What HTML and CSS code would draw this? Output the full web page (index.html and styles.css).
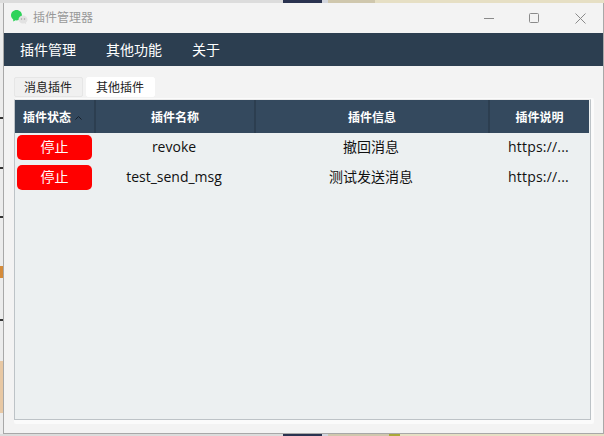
FILE: index.html
```html
<!DOCTYPE html>
<html lang="zh">
<head>
<meta charset="utf-8">
<title>插件管理器</title>
<link rel="stylesheet" href="styles.css">
</head>
<body>
<div class="desktop">
  <div class="strip strip-top">
    <span class="seg s-grey"></span><span class="seg s-navy"></span><span class="seg s-pale"></span><span class="seg s-tan"></span><span class="seg s-cream"></span>
  </div>
  <div class="middle">
    <div class="side">
      <span class="side-gap g1"></span><span class="side-mark m-dark"></span>
      <span class="side-gap g2"></span><span class="side-mark m-dark"></span>
      <span class="side-gap g3"></span><span class="side-mark m-dark"></span>
      <span class="side-gap g4"></span><span class="side-mark m-orange"></span>
      <span class="side-gap g5"></span><span class="side-mark m-dark"></span>
      <span class="side-gap g6"></span><span class="side-mark m-peach"></span>
    </div>
    <div class="window">
      <header class="titlebar">
        <svg class="app-icon" width="17" height="15" viewBox="0 0 17 15">
          <path d="M5.500 0C2.400 0 0 2.300 0 5.200c0 1.700.8 3.200 2.200 4.200L2.300 11.500l2.200-1.200c.3.100.7.100 1 .1 3.100 0 5.500-2.300 5.500-5.200S8.600 0 5.500 0z" fill="#2fd35b"/>
          <path d="M12 5.500C9.500 5.500 7.500 7.300 7.500 9.500s2 4 4.500 4c.5 0 1-.1 1.500-.2l1.700.9-.3-1.600c1-.7 1.600-1.900 1.600-3.100 0-2.200-2-4-4.500-4z" fill="#e2e2e2"/>
          <circle cx="10.500" cy="9" r=".8" fill="#a5a5a5"/><circle cx="13.500" cy="9" r=".8" fill="#a5a5a5"/>
        </svg>
        <span class="title-text">插件管理器</span>
        <div class="controls">
          <svg class="ctl ctl-min" width="10" height="10" viewBox="0 0 10 10"><path d="M0 5.500h10" stroke="#8a8a8a" fill="none"/></svg>
          <svg class="ctl ctl-max" width="10" height="10" viewBox="0 0 10 10"><rect x=".5" y=".5" width="9" height="9" rx="1" stroke="#8a8a8a" fill="none"/></svg>
          <svg class="ctl ctl-close" width="11" height="11" viewBox="0 0 11 11"><path d="M.5.500l10 10M10.500.500l-10 10" stroke="#8a8a8a" fill="none"/></svg>
        </div>
      </header>
      <nav class="menubar">
        <span class="menu-item">插件管理</span>
        <span class="menu-item">其他功能</span>
        <span class="menu-item">关于</span>
      </nav>
      <div class="content">
        <div class="tabs">
          <span class="tab">消息插件</span>
          <span class="tab tab-active">其他插件</span>
        </div>
        <div class="pane">
          <div class="table-box">
            <table class="plugins">
              <colgroup><col class="c1"><col class="c2"><col class="c3"><col class="c4"></colgroup>
              <thead>
                <tr>
                  <th class="th-sort"><span>插件状态</span><svg class="caret" width="7" height="4" viewBox="0 0 7 4"><path d="M.5 3.500l3-3 3 3" stroke="#16202b" fill="none"/></svg></th>
                  <th>插件名称</th>
                  <th>插件信息</th>
                  <th class="th-last">插件说明</th>
                </tr>
              </thead>
              <tbody>
                <tr>
                  <td class="td-btn"><button class="stop" type="button">停止</button></td>
                  <td class="td-text">revoke</td>
                  <td class="td-text">撤回消息</td>
                  <td class="td-link">https://...</td>
                </tr>
                <tr>
                  <td class="td-btn"><button class="stop" type="button">停止</button></td>
                  <td class="td-text">test_send_msg</td>
                  <td class="td-text">测试发送消息</td>
                  <td class="td-link">https://...</td>
                </tr>
              </tbody>
            </table>
          </div>
        </div>
      </div>
    </div>
  </div>
  <div class="strip strip-bottom">
    <span class="seg s-grey"></span><span class="seg s-navy"></span><span class="seg s-pale"></span><span class="seg s-tan-b"></span><span class="seg s-olive"></span><span class="seg s-cream"></span>
  </div>
</div>
</body>
</html>
```
FILE: styles.css
```css
* { box-sizing: border-box; }
html, body { margin: 0; padding: 0; }
body {
  width: 604px;
  height: 436px;
  overflow: hidden;
  font-family: "Open Sans", "Noto Sans CJK SC", sans-serif;
  background: #c9c9c9;
}
.desktop { width: 604px; height: 436px; display: flex; flex-direction: column; }

.strip { display: flex; flex: none; }
.strip-top { height: 3px; }
.strip-bottom { height: 2px; }
.seg { display: block; height: 100%; }
.s-grey { width: 283px; background: #dcdcdc; }
.s-navy { width: 39px; background: #2a3350; }
.s-pale { width: 6px; background: #d3d6de; }
.s-tan { width: 47px; background: #cfc7ad; }
.s-tan-b { width: 61px; background: #cfc7ad; }
.s-olive { width: 11px; background: #a9a83a; }
.s-cream { flex: 1; background: #e6dfc4; }

.middle { display: flex; flex: 1; min-height: 0; }
.side { width: 3px; flex: none; display: flex; flex-direction: column; background: #ececec; }
.side-gap { display: block; }
.g1 { height: 114px; }
.g2 { height: 48px; }
.g3 { height: 47px; }
.g4 { height: 48px; }
.g5 { height: 41px; }
.g6 { height: 40px; }
.side-mark { display: block; }
.m-dark { height: 2px; background: #333; }
.m-orange { height: 12px; background: #d58b3a; }
.m-peach { height: 52px; background: #e8c8a4; }

.window {
  flex: 1;
  display: flex;
  flex-direction: column;
  min-width: 0;
  background: #f3f3f3;
  border-left: 1px solid #a8a8a8;
  border-right: 1px solid #a8a8a8;
  border-bottom: 1px solid #a8a8a8;
}

.titlebar {
  height: 30px;
  flex: none;
  display: flex;
  align-items: center;
  padding-left: 7px;
}
.app-icon { flex: none; margin-top: -1px; }
.title-text { margin-left: 5px; font-size: 12px; color: #999; line-height: 30px; }
.controls { margin-left: auto; display: flex; align-items: center; padding-right: 17px; }
.ctl { display: block; }
.ctl-min { margin-right: 35px; }
.ctl-max { margin-right: 36px; }

.menubar {
  height: 33px;
  flex: none;
  display: flex;
  align-items: center;
  gap: 30px;
  padding-left: 16px;
  background: #2c3e50;
}
.menu-item { font-size: 14px; color: #fff; line-height: 33px; }

.content { flex: 1; min-height: 0; display: flex; flex-direction: column; padding: 11px 9px 9px 10px; }
.tabs { display: flex; gap: 3px; height: 21px; flex: none; }
.tab {
  width: 69px;
  height: 20px;
  padding-right: 1px;
  font-size: 12px;
  line-height: 20px;
  text-align: center;
  color: #222;
  background: #f0f0f0;
  border: 1px solid #e6e6e6;
  border-radius: 2px;
}
.tab-active { background: #fff; border-color: #fff; }

.pane {
  flex: 1;
  min-height: 0;
  display: flex;
  padding: 1px 3px 4px 0;
  background: #fbfbfb;
  border-radius: 2px;
}
.table-box {
  flex: 1;
  min-width: 0;
  background: #ecf0f1;
  border: 1px solid #bdc3c7;
  border-top-color: #e9e9e9;
}
.plugins {
  width: 574px;
  table-layout: fixed;
  border-collapse: separate;
  border-spacing: 0;
  color: #111;
}
.c1 { width: 81px; }
.c2 { width: 160px; }
.c3 { width: 234px; }
.c4 { width: 99px; }
.plugins th {
  padding: 0;
  height: 33px;
  font-size: 12px;
  font-weight: 700;
  color: #fff;
  text-align: center;
  background: #34495e;
  border-right: 2px solid #2c3e50;
}
.plugins th.th-last { border-right: 0; }
.plugins th.th-sort { text-align: left; padding-left: 8px; white-space: nowrap; }
.caret { margin-left: 4px; vertical-align: 2px; }
.plugins td {
  height: 30px;
  padding: 0 0 3px;
  font-size: 14px;
  line-height: 20px;
  vertical-align: middle;
  white-space: nowrap;
  overflow: hidden;
}
.plugins td.td-text { text-align: center; padding-right: 4px; }
.plugins td.td-btn { padding: 2px 0 3px 2px; }
.plugins td.td-link { text-align: left; padding-left: 18px; letter-spacing: .2px; }
.stop {
  display: block;
  width: 75px;
  height: 25px;
  padding: 0 0 2px;
  border: 0;
  border-radius: 5px;
  background: #f00;
  color: #fff;
  font-family: inherit;
  font-size: 14px;
  line-height: 23px;
}
```
